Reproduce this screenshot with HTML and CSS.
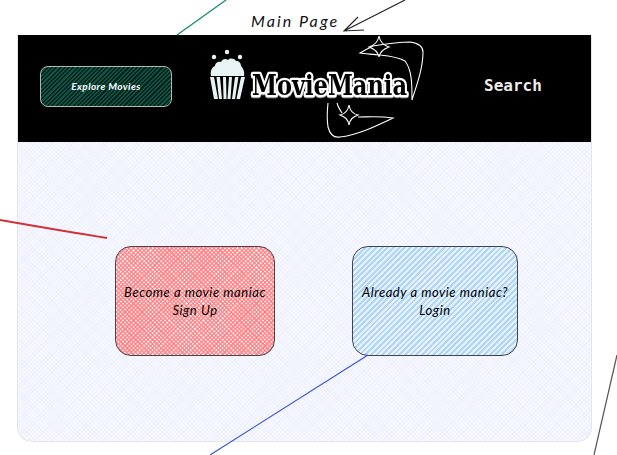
FILE: index.html
```html
<!DOCTYPE html>
<html lang="en">
<head>
<meta charset="utf-8">
<title>MovieMania</title>
<link rel="stylesheet" href="styles.css">
</head>
<body>
<div class="page">
  <div class="label">Main Page</div>
  <section class="card">
    <header class="topbar">
      <a class="explore">Explore Movies</a>
      <div class="logo">
        <svg class="logo-art" width="215" height="107" viewBox="210 35 215 107">
          <g class="corn">
            <circle cx="214" cy="57" r="2.2"/><circle cx="227" cy="52" r="2.2"/><circle cx="240" cy="57" r="2.2"/>
            <path d="M211 76c-1-5 1-9 4-10 0-3 3-5 6-4 1-3 5-4 7-2 2-2 6-2 8 1 3 0 5 2 5 5 2 2 4 6 3 10z"/>
            <path d="M210 77h4l4 22h-4zM216.500 77h3.500l2 22h-3zM223 77h3l.5 22h-3zM229 77h3l-1.500 22h-3zM235 77h3.500l-3.500 22h-3zM241 77h4l-5 22h-3.500z"/>
          </g>
          <text class="wordmark" x="252" y="95" textLength="155" lengthAdjust="spacingAndGlyphs">MovieMania</text>
          <g class="swoosh">
            <path d="M360 53C365 50 369 48 373 46C386 44 400 42 410 42C418 43 423 46 423 52C423 68 417 84 412 100C412 84 412 70 405 61C398 57 390 56 380 55C372 54 365 54 360 53z"/>
            <path d="M379 36C380 42 383 45 389 47C383 49 380 52 379 57C378 52 375 49 369 47C375 45 378 42 379 36z"/>
            <path d="M328 103C327 112 327 120 328 127C330 135 334 138 340 137C358 135 376 126 393 118C380 116 368 117 358 117"/>
            <path d="M349 105C350 111 353 114 358 115C353 117 350 119 349 125C348 119 345 117 340 115C345 114 348 111 349 105zM342 113C340 110 338 107 337 103"/>
          </g>
        </svg>
      </div>
      <div class="search">Search</div>
    </header>
    <main class="content">
      <a class="cta cta-red">Become a movie maniac<br>Sign Up</a>
      <a class="cta cta-blue">Already a movie maniac?<br>Login</a>
    </main>
  </section>
  <svg class="doodles" width="617" height="455" viewBox="0 0 617 455">
    <path class="green" d="M177 35L226 0"/>
    <path class="ink" d="M405 0L344 31M358 17L344 31L364 30"/>
    <path class="red" d="M0 220C40 227 75 233 107 238"/>
    <path class="blue" d="M368 355L210 455"/>
    <path class="grey" d="M617 355L594 455"/>
  </svg>
</div>
</body>
</html>
```

FILE: styles.css
```css
* { box-sizing: border-box; }
html, body { margin: 0; background: #fff; }
.page {
  position: relative;
  width: 617px;
  height: 455px;
  overflow: hidden;
  padding: 11px 25px 0 17px;
  font-family: "Lato", sans-serif;
}
.label {
  height: 24px;
  padding-left: 234px;
  font: italic 16px/19px "Lato", sans-serif;
  letter-spacing: 2.1px;
  color: #111;
}
.card {
  width: 575px;
  height: 407px;
  border: 1px solid #e4e5ea;
  border-top: 0;
  border-radius: 0 0 15px 15px;
  overflow: hidden;
  background-color: #f7f8ff;
  background-image:
    repeating-linear-gradient(45deg, rgba(224,231,250,.3) 0 1px, transparent 1px 3px),
    repeating-linear-gradient(-45deg, rgba(224,231,250,.3) 0 1px, transparent 1px 3px);
}
.topbar {
  display: flex;
  align-items: center;
  height: 107px;
  padding: 0 0 5px 22px;
  background: #000;
}
.explore {
  display: flex;
  align-items: center;
  justify-content: center;
  width: 132px;
  height: 41px;
  border: 1.5px solid #b4b9b6;
  border-radius: 8px;
  color: #fff;
  font: italic bold 10px "Lato", sans-serif;
  letter-spacing: .4px;
  background: repeating-linear-gradient(135deg, #0d5544 0 1.5px, #03201a 1.5px 3px);
}
.logo {
  align-self: flex-start;
  width: 215px;
  height: 107px;
  margin-left: 38px;
}
.logo-art { display: block; overflow: visible; }
.corn { fill: #e8f4f4; }
.wordmark {
  font: bold 27px "DejaVu Serif Condensed", "DejaVu Serif", serif;
  fill: #000;
  stroke: #fff;
  stroke-width: 4.5px;
  paint-order: stroke;
  stroke-linejoin: round;
  filter: drop-shadow(0 1px 0 #8d8d8d);
}
.swoosh {
  fill: none;
  stroke: #fff;
  stroke-width: 1.1;
}
.search {
  margin: 0 0 2px 59px;
  color: #ececec;
  font: bold 16px "DejaVu Sans Mono", monospace;
}
.content {
  display: flex;
  align-items: flex-start;
  height: 300px;
  padding: 104px 0 0 97px;
  gap: 77px;
}
.cta {
  display: flex;
  align-items: center;
  justify-content: center;
  height: 110px;
  text-align: center;
  border: 1.5px solid #45434a;
  border-radius: 16px;
  color: #000;
  font: italic 13px/18px "Lato", sans-serif;
  letter-spacing: .55px;
}
.cta-red {
  width: 160px;
  background-color: #ffe6e6;
  background-image:
    repeating-linear-gradient(45deg, rgba(255,125,130,.75) 0 1.5px, transparent 1.5px 3px),
    repeating-linear-gradient(-45deg, rgba(255,125,130,.75) 0 1.5px, transparent 1.5px 3px);
}
.cta-blue {
  width: 166px;
  background: repeating-linear-gradient(135deg, #afd6f8 0 2px, #e6f2fd 2px 4px);
}
.doodles {
  position: absolute;
  left: 0;
  top: 0;
  pointer-events: none;
  fill: none;
}
.green { stroke: #0f8a68; stroke-width: 1.2; }
.ink { stroke: #1e1e1e; stroke-width: 1.1; }
.red { stroke: #d22f36; stroke-width: 2.2; }
.blue { stroke: #3b55d2; stroke-width: 1.2; }
.grey { stroke: #555; stroke-width: 1.2; }
```
